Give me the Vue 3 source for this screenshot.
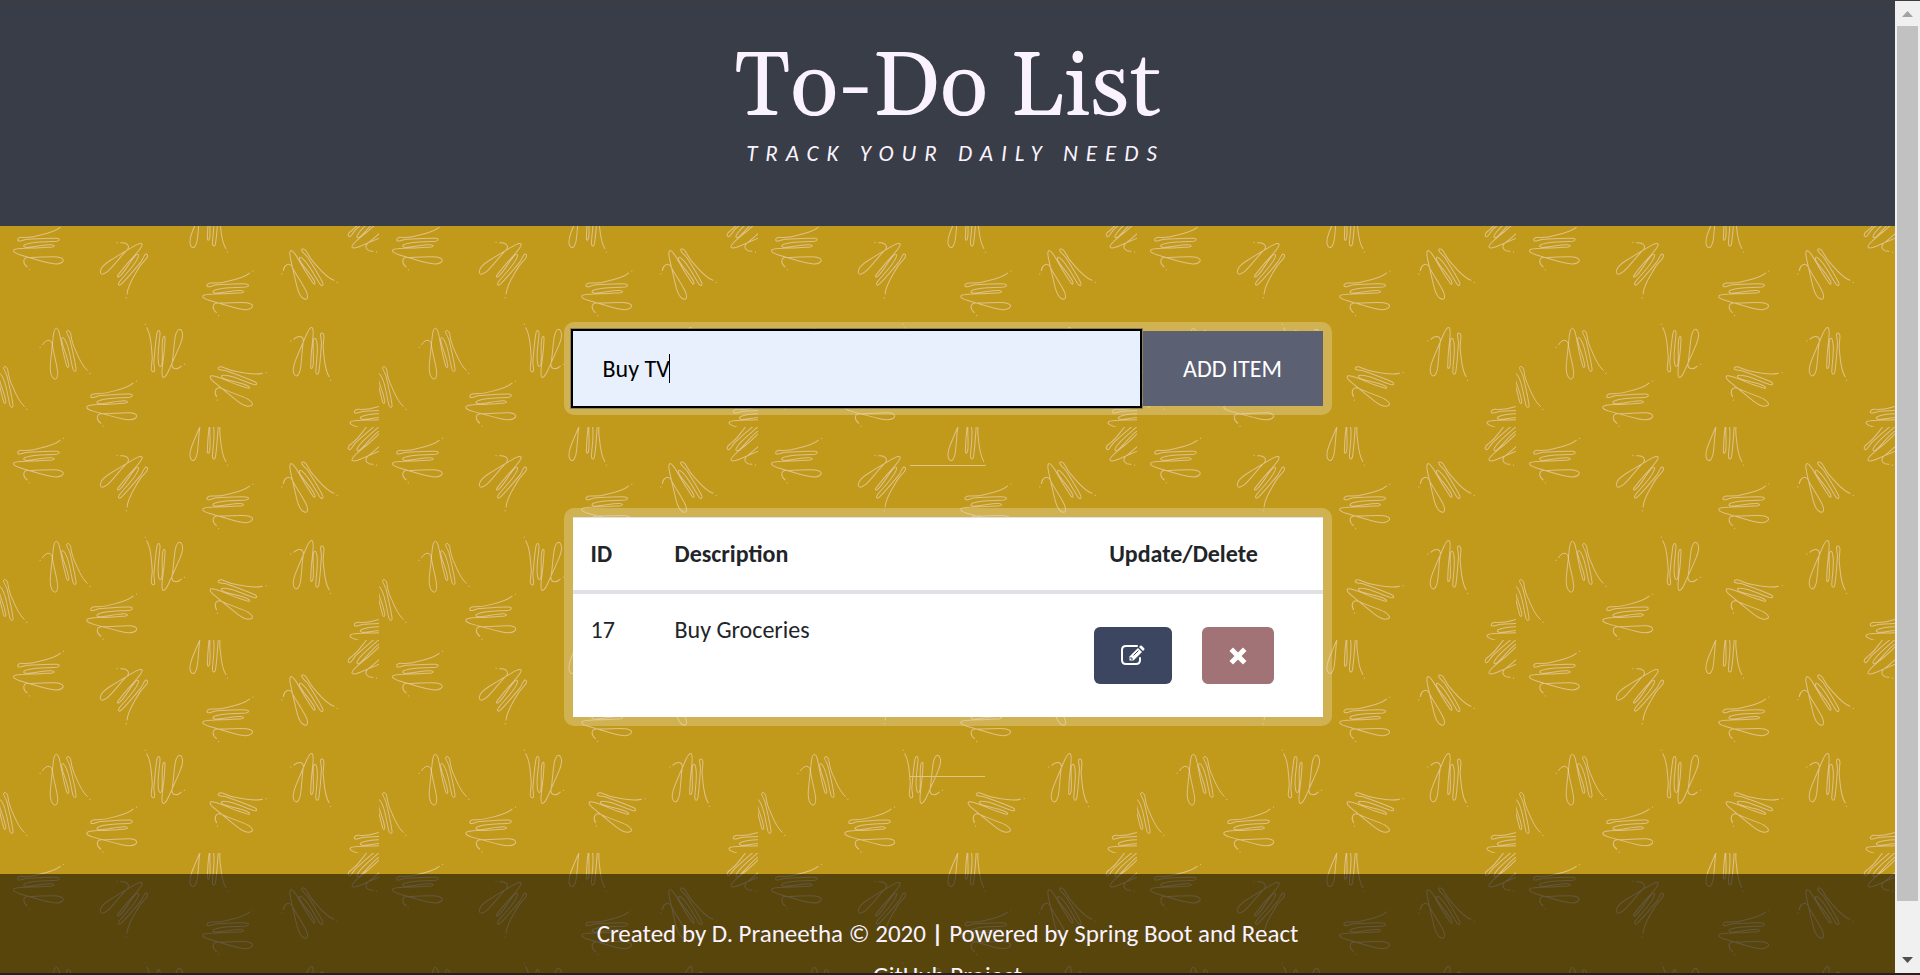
<script setup>
import { ref } from 'vue'

const draft = ref('Buy TV')
const items = ref([{ id: 17, description: 'Buy Groceries' }])

// Each stroke group starts at (x, y) and is turned by r degrees.
const scribbles = [
  { x: 120, y: 400, r: 0 },
  { x: 88, y: 168, r: -80 },
  { x: 351, y: 85, r: 53 },
  { x: 656, y: 305, r: -80 },
  { x: 845, y: 180, r: -19 },
  { x: 554, y: 451, r: -162 },
  { x: 872, y: 381, r: 17 },
  { x: 652, y: 559, r: -57 },
  { x: 309, y: 637, r: -81 },
  { x: -69, y: 508, r: 0 },
  { x: 1098, y: 684, r: -80 },
  { x: 562, y: -4, r: 17 },
  { x: 1130, y: 115, r: -119 }
]

function addItem() {
  const text = draft.value.trim()
  if (!text) return
  const last = items.value[items.value.length - 1]
  items.value.push({ id: last ? last.id + 1 : 1, description: text })
  draft.value = ''
}

function editItem(item) {
  draft.value = item.description
}

function removeItem(item) {
  items.value = items.value.filter((entry) => entry.id !== item.id)
}
</script>

<template>
  <div class="window">
    <div class="page">
      <svg class="backdrop" aria-hidden="true">
        <defs>
          <g id="scribble" fill="none" stroke-linecap="round" stroke-linejoin="round">
            <path
              d="M8-8C15-22 32-28 37-10C38 8 52 56 53 76C53 98 45 98 39 92C31 84 30 66 31 52C33 30 37-8 40-34C42-52 46-58 50-57C58-54 60-32 66-4C70 20 76 40 80 56C83 64 87 62 86 52C83 30 70 4 65-20C64-32 70-32 75-22C88 0 92 40 99 66C103 76 109 74 108 64C104 36 96 4 90-22C84-38 79-42 80-48C84-54 92-48 93-36C95-20 100-4 108 12C117 34 129 58 142 69"
            />
            <path d="M0 0h1M149 78h1" />
          </g>
          <pattern id="doodles" width="379" height="213" patternUnits="userSpaceOnUse">
            <g transform="scale(0.3333)">
              <use
                v-for="(s, i) in scribbles"
                :key="i"
                href="#scribble"
                :transform="`translate(${s.x} ${s.y}) rotate(${s.r})`"
              />
            </g>
          </pattern>
        </defs>
        <rect width="100%" height="100%" fill="url(#doodles)" />
      </svg>

      <header class="masthead">
        <h1>To-Do List</h1>
        <p>Track your daily needs</p>
      </header>

      <main class="content">
        <form class="frame entry" @submit.prevent="addItem">
          <div class="field">
            <input v-model="draft" type="text" aria-label="New item" autocomplete="off" />
            <span class="caret"></span>
          </div>
          <button type="submit">Add Item</button>
        </form>

        <hr />

        <div class="frame">
          <table>
            <thead>
              <tr>
                <th class="id">ID</th>
                <th>Description</th>
                <th class="actions">Update/Delete</th>
              </tr>
            </thead>
            <tbody>
              <tr v-for="item in items" :key="item.id">
                <td>{{ item.id }}</td>
                <td>{{ item.description }}</td>
                <td>
                  <div class="buttons">
                    <button class="edit" type="button" aria-label="Update" @click="editItem(item)">
                      <svg width="26" height="24" viewBox="0 0 26 24">
                        <path
                          d="M17 2H6Q2 2 2 6V16Q2 20 6 20H16Q20 20 20 16V14"
                          fill="none"
                          stroke="#fff"
                          stroke-width="2"
                          stroke-linecap="round"
                        />
                        <path d="M9.500 12.500L18 4L22 8L13.500 16.500H9.500Z" fill="#fff" />
                        <path
                          d="M19 3L20.200 1.800Q21 1 21.800 1.800L24.200 4.200Q25 5 24.200 5.800L23 7Z"
                          fill="#fff"
                        />
                        <path d="M11 13v2h2M13.500 11.500L18.500 6.500" fill="none" stroke="#3c4661" />
                      </svg>
                    </button>
                    <button class="delete" type="button" aria-label="Delete" @click="removeItem(item)">
                      <svg width="18" height="18" viewBox="0 0 18 18">
                        <path
                          d="M4 4L14 14M14 4L4 14"
                          stroke="#fff"
                          stroke-width="5"
                          stroke-linecap="square"
                          stroke-linejoin="round"
                        />
                      </svg>
                    </button>
                  </div>
                </td>
              </tr>
            </tbody>
          </table>
        </div>

        <hr />
      </main>

      <footer>
        <p>Created by D. Praneetha © 2020 <b>|</b> Powered by Spring Boot and React</p>
        <a href="#">GitHub Project</a>
      </footer>
    </div>

    <div class="scrollbar" aria-hidden="true">
      <svg width="25" height="25" viewBox="0 0 25 25"><path d="M7 16h11l-5.500-6z" fill="#a3a3a3" /></svg>
      <div class="thumb"></div>
      <svg width="25" height="25" viewBox="0 0 25 25"><path d="M7 9h11l-5.500 6z" fill="#505050" /></svg>
    </div>
  </div>
</template>

<style>
body {
  overflow: hidden;
}
</style>

<style scoped>
* {
  box-sizing: border-box;
}

.window {
  display: grid;
  grid-template-columns: 1fr 25px;
  height: 100vh;
  border-top: 1px solid #3f3b3d;
  border-bottom: 2px solid #24221f;
  font-family: Calibri, Carlito, Lato, sans-serif;
  font-size: 24px;
  line-height: 36px;
  color: #212529;
}

.page {
  position: relative;
  overflow: hidden;
  background: #c19a1b;
}

.backdrop {
  position: absolute;
  inset: 0;
  width: 100%;
  height: 100%;
  stroke: #f0d6c4;
  stroke-width: 3;
  stroke-opacity: 0.65;
}

.backdrop rect {
  stroke: none;
}

.masthead,
.content,
footer {
  position: relative;
}

.masthead {
  height: 225px;
  padding-top: 42px;
  background: #393d47;
  color: #faf3ff;
  text-align: center;
}

h1 {
  margin: 0;
  font-family: Georgia, Gelasio, "Liberation Serif", serif;
  font-size: 90px;
  font-weight: 400;
  line-height: 92px;
}

.masthead p {
  margin: 0;
  padding-left: 16px;
  font-size: 23px;
  font-style: italic;
  letter-spacing: 8px;
  text-transform: uppercase;
}

.content {
  display: flex;
  flex-direction: column;
  align-items: center;
  padding: 96px 0 97px;
}

.frame {
  width: 768px;
  max-width: 100%;
  padding: 9px;
  border-radius: 10px;
  background: rgba(229, 214, 166, 0.4);
}

.entry {
  display: flex;
  gap: 3px;
}

.field {
  position: relative;
  flex: 1;
}

.field input {
  display: block;
  width: 100%;
  height: 75px;
  padding: 0 30px;
  border: 0;
  outline: 2px solid #000;
  box-shadow: 0 0 0 3px rgba(80, 80, 80, 0.5);
  background: #e8f0fe;
  color: #000;
  font: inherit;
}

.caret {
  position: absolute;
  top: 23px;
  left: 96px;
  width: 1px;
  height: 29px;
  background: #000;
}

.entry button {
  width: 180px;
  border: 0;
  background: #5b6073;
  color: #fff;
  font: inherit;
  text-transform: uppercase;
}

hr {
  width: 75px;
  height: 1px;
  margin: 50px 0 42px;
  border: 0;
  background: #e0c583;
}

hr:last-child {
  margin-bottom: 0;
}

table {
  width: 100%;
  border-collapse: collapse;
  border-top: 1px solid #dee2e6;
  background: #fff;
  table-layout: fixed;
}

th,
td {
  padding: 18px;
  text-align: left;
  vertical-align: top;
}

th {
  border-bottom: 4px solid #dee2e6;
}

.id {
  width: 84px;
}

.actions {
  width: 278px;
  text-align: center;
}

.buttons {
  display: flex;
  gap: 30px;
  padding: 15px 0 15px 31px;
}

.buttons button {
  display: flex;
  align-items: center;
  justify-content: center;
  height: 57px;
  padding: 0;
  border: 0;
  border-radius: 6px;
}

.buttons .edit {
  width: 78px;
  background: #3c4661;
}

.buttons .delete {
  width: 72px;
  background: #a17276;
}

footer {
  min-height: 150px;
  padding-top: 39px;
  background: rgba(0, 0, 0, 0.55);
  color: #faf3ff;
  font-size: 25px;
  line-height: 42px;
  text-align: center;
}

footer p {
  margin: 0;
}

footer a {
  color: inherit;
  text-decoration: none;
}

.scrollbar {
  display: flex;
  flex-direction: column;
  background: #f0f0f0;
}

.thumb {
  flex: 0 0 90%;
  width: 21px;
  margin: 0 auto auto;
  background: #c1c1c1;
}
</style>
